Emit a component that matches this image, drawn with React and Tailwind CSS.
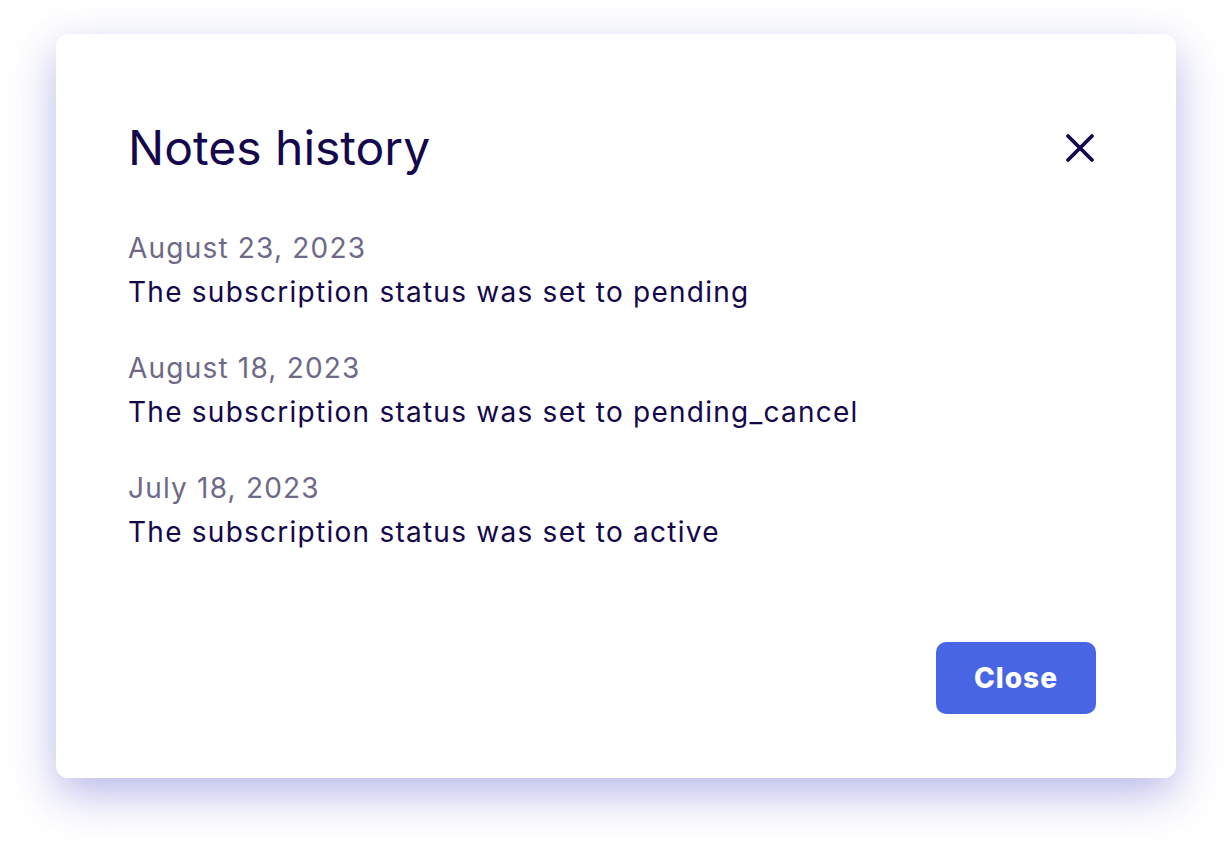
import React from "react";

const entries = [
  { date: "August 23, 2023", text: "The subscription status was set to pending" },
  { date: "August 18, 2023", text: "The subscription status was set to pending_cancel" },
  { date: "July 18, 2023", text: "The subscription status was set to active" },
];

export default function App() {
  return (
    <div className="w-[1230px] h-[853px] bg-white flex items-start pl-[56px] pt-[34px]" style={{ fontFamily: "Inter, 'Noto Sans', sans-serif" }}>
      <div className="w-[1120px] h-[744px] bg-white rounded-[12px] shadow-[0_16px_44px_rgba(70,70,200,0.38)] pl-[72px] pr-[80px] pt-[86px] flex flex-col">
        <div className="flex items-center justify-between">
          <h2 className="text-[48px] leading-[56px] text-[#14074c] tracking-[0px]">Notes history</h2>
          <button className="w-[40px] h-[40px] flex items-center justify-center -mr-[4px]">
            <svg width="30" height="30" viewBox="0 0 30 30" fill="none" stroke="#14074c" strokeWidth="3.8" strokeLinecap="round">
              <path d="M3 3 L27 27 M27 3 L3 27" />
            </svg>
          </button>
        </div>
        <div className="mt-[50px] flex flex-col gap-[32px]">
          {entries.map((e) => (
            <div key={e.date} className="flex flex-col">
              <div className="text-[28px] leading-[44px] text-[#6d6987] tracking-[1.2px]">{e.date}</div>
              <div className="text-[28px] leading-[44px] text-[#14074c] tracking-[1.25px]">{e.text}</div>
            </div>
          ))}
        </div>
        <div className="flex justify-end mt-[88px]">
          <button className="w-[160px] h-[72px] rounded-[10px] bg-[#4866e4] text-white text-[28px] font-extrabold tracking-[1px]">Close</button>
        </div>
      </div>
    </div>
  );
}
